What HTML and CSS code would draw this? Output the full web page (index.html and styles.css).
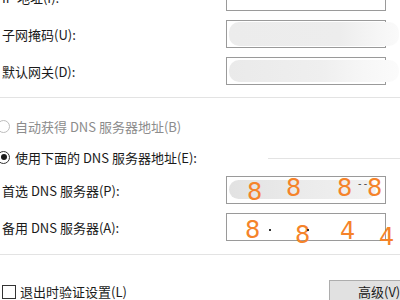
FILE: index.html
```html
<!DOCTYPE html>
<html lang="zh-CN">
<head>
    <meta charset="UTF-8">
    <title>Internet 协议版本 4 (TCP/IPv4) 属性</title>
    <link rel="stylesheet" href="styles.css">
</head>
<body>
    <div class="panel">
        <!-- IP 地址部分 -->
        <div class="fields ip-fields">
            <div class="row">
                <label class="label">IP 地址(I):</label>
                <div class="box"><div class="smear smear-a"></div></div>
            </div>
            <div class="row">
                <label class="label">子网掩码(U):</label>
                <div class="box"><div class="smear smear-b"></div></div>
            </div>
            <div class="row">
                <label class="label">默认网关(D):</label>
                <div class="box"><div class="smear smear-c"></div></div>
            </div>
        </div>

        <div class="divider"></div>

        <!-- DNS 部分 -->
        <div class="choice disabled">
            <span class="radio"></span>
            <span>自动获得 DNS 服务器地址(B)</span>
        </div>
        <div class="choice">
            <span class="radio checked"></span>
            <span>使用下面的 DNS 服务器地址(E):</span>
            <span class="group-line"></span>
        </div>

        <div class="fields dns-fields">
            <div class="row">
                <label class="label">首选 DNS 服务器(P):</label>
                <div class="box">
                    <div class="smear smear-d"></div>
                    <span class="digit" style="left: 20px; top: 3px;">8</span>
                    <span class="digit" style="left: 59px; top: -1px;">8</span>
                    <span class="digit" style="left: 110px; top: -1px;">8</span>
                    <span class="dashes">- -</span>
                    <span class="digit" style="left: 140px; top: -1px;">8</span>
                </div>
            </div>
            <div class="row">
                <label class="label">备用 DNS 服务器(A):</label>
                <div class="box">
                    <span class="digit" style="left: 18px; top: 4px;">8</span>
                    <span class="dot" style="left: 42px; top: 15px;"></span>
                    <span class="digit" style="left: 68px; top: 9px;">8</span>
                    <span class="dot" style="left: 80px; top: 15px;"></span>
                    <span class="digit" style="left: 113px; top: 5px;">4</span>
                    <span class="digit" style="left: 152px; top: 11px;">4</span>
                </div>
            </div>
        </div>

        <div class="divider bottom"></div>

        <div class="footer">
            <div class="check">
                <span class="checkbox"></span>
                <span>退出时验证设置(L)</span>
            </div>
            <button class="btn">高级(V)...</button>
        </div>
    </div>
</body>
</html>
```

FILE: styles.css
```css
body {
    margin: 0;
    background: #fff;
    color: #1a1a1a;
    font-family: "Noto Sans CJK SC", "Noto Sans", sans-serif;
    font-size: 13px;
    overflow: hidden;
}
.panel {
    width: 400px;
    height: 300px;
    overflow: hidden;
}
.fields {
    display: flex;
    flex-direction: column;
    gap: 9px;
}
.ip-fields {
    margin-top: -17px;
}
.row {
    display: flex;
    align-items: center;
    height: 28px;
}
.label {
    width: 224px;
    padding-left: 2px;
    white-space: nowrap;
}
.box {
    position: relative;
    width: 158px;
    height: 26px;
    border: 1px solid #9a9a9a;
    background: #fff;
}
.smear {
    position: absolute;
    border-radius: 10px;
}
.smear-a {
    left: 6px;
    top: -4px;
    width: 150px;
    height: 12px;
    background: linear-gradient(90deg, #f3f3f3, #eaeaea 60%, #f6f6f6);
}
.smear-b {
    left: 2px;
    top: 1px;
    width: 170px;
    height: 24px;
    background: linear-gradient(90deg, #ececec, #ededed 65%, #f5f5f5 85%, #fafafa);
}
.smear-c {
    left: 2px;
    top: 2px;
    width: 170px;
    height: 22px;
    background: linear-gradient(90deg, #eaeaea, #efefef 55%, #f7f7f7 80%, #fbfbfb);
}
.smear-d {
    left: 2px;
    top: 3px;
    width: 147px;
    height: 19px;
    background: linear-gradient(90deg, #e2e2e2, #ebebeb 50%, #f1f1f1);
}
.digit {
    position: absolute;
    font-family: "DejaVu Sans", sans-serif;
    font-size: 24px;
    line-height: 24px;
    color: #f5832a;
}
.dashes {
    position: absolute;
    left: 131px;
    top: 1px;
    font-size: 10px;
    line-height: 10px;
    color: #222;
}
.dot {
    position: absolute;
    width: 2px;
    height: 2px;
    background: #333;
}
.divider {
    height: 1px;
    background: #e3e3e3;
    margin-top: 12px;
}
.divider.bottom {
    margin-top: 13px;
}
.choice {
    display: flex;
    align-items: center;
    height: 20px;
    margin-top: 18px;
    white-space: nowrap;
}
.choice + .choice {
    margin-top: 11px;
    margin-bottom: 9px;
}
.choice.disabled {
    color: #8c8c8c;
}
.radio {
    width: 11px;
    height: 11px;
    border: 1px solid #bdbdbd;
    border-radius: 50%;
    margin-left: -3px;
    margin-right: 5px;
    flex-shrink: 0;
    position: relative;
}
.radio.checked {
    border-color: #333;
}
.radio.checked::after {
    content: "";
    position: absolute;
    left: 2.5px;
    top: 2.5px;
    width: 6px;
    height: 6px;
    border-radius: 50%;
    background: #1a1a1a;
}
.group-line {
    margin-left: auto;
    width: 132px;
    height: 1px;
    background: #e3e3e3;
    margin-top: 2px;
}
.footer {
    display: flex;
    align-items: center;
    justify-content: space-between;
    margin-top: 25px;
}
.check {
    display: flex;
    align-items: center;
    white-space: nowrap;
}
.checkbox {
    width: 12px;
    height: 12px;
    border: 1px solid #333;
    margin-left: 2px;
    margin-right: 4px;
}
.btn {
    width: 90px;
    height: 23px;
    margin-right: -19px;
    padding: 0 0 0 28px;
    text-align: left;
    font-family: inherit;
    font-size: 13px;
    color: #1a1a1a;
    background: #e1e1e1;
    border: 1px solid #adadad;
}
```
